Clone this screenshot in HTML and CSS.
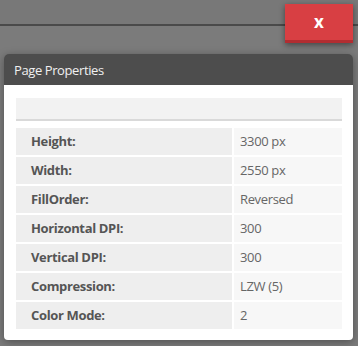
FILE: index.html
```html
<!DOCTYPE html>
<html lang="en">
<head>
    <meta charset="UTF-8">
    <meta name="viewport" content="width=device-width, initial-scale=1.0">
    <title>Page Properties</title>
    <link rel="stylesheet" href="styles.css">
</head>
<body>
    <div class="top-bar">
        <button type="button" class="close-btn">x</button>
    </div>
    <div class="dialog">
        <div class="dialog-header">Page Properties</div>
        <div class="dialog-body">
            <div class="props-head"></div>
            <div class="props">
                <div class="prop-label">Height:</div>
                <div class="prop-value">3300 px</div>
                <div class="prop-label">Width:</div>
                <div class="prop-value">2550 px</div>
                <div class="prop-label">FillOrder:</div>
                <div class="prop-value">Reversed</div>
                <div class="prop-label">Horizontal DPI:</div>
                <div class="prop-value">300</div>
                <div class="prop-label">Vertical DPI:</div>
                <div class="prop-value">300</div>
                <div class="prop-label">Compression:</div>
                <div class="prop-value">LZW (5)</div>
                <div class="prop-label">Color Mode:</div>
                <div class="prop-value">2</div>
            </div>
        </div>
    </div>
</body>
</html>
```

FILE: styles.css
```css
body {
    font-family: "Open Sans", "Noto Sans", Arial, sans-serif;
    background-color: #7b7b7b;
    margin: 0;
    padding: 0;
    width: 358px;
    height: 346px;
    overflow: hidden;
}
.top-bar {
    position: relative;
    height: 24px;
    border-bottom: 2px solid #4a4a4a;
    background-color: #787878;
}
.close-btn {
    position: absolute;
    top: 4px;
    left: 285px;
    width: 68px;
    height: 39px;
    padding: 0 0 3px;
    border: none;
    border-bottom: 3px solid #b22d31;
    background-color: #d83f43;
    color: #fff;
    font-family: inherit;
    font-size: 17px;
    font-weight: bold;
    line-height: 36px;
    box-shadow: 0 2px 6px rgba(0, 0, 0, 0.45);
    cursor: pointer;
}
.dialog {
    margin: 28px 0 0 4px;
    width: 349px;
    border-radius: 5px 5px 4px 4px;
    overflow: hidden;
    box-shadow: 0 2px 8px rgba(0, 0, 0, 0.35);
}
.dialog-header {
    height: 31px;
    padding-left: 10px;
    background-color: #4d4d4d;
    color: #f0f0f0;
    font-size: 13px;
    letter-spacing: -0.4px;
    line-height: 32px;
}
.dialog-body {
    background-color: #fff;
    padding: 13px 11px 11px 12px;
}
.props-head {
    height: 21px;
    background-color: #f2f2f2;
    border-bottom: 2px solid #d9d9d9;
    margin-bottom: 7px;
}
.props {
    display: grid;
    grid-template-columns: 216px 108px;
    grid-auto-rows: 27px;
    gap: 2px;
    font-size: 13px;
    letter-spacing: -0.35px;
    line-height: 27px;
}
.prop-label {
    background-color: #eeeeee;
    color: #555;
    font-weight: bold;
    padding-left: 15px;
}
.prop-value {
    background-color: #f7f7f7;
    color: #666;
    padding-left: 6px;
}
```
